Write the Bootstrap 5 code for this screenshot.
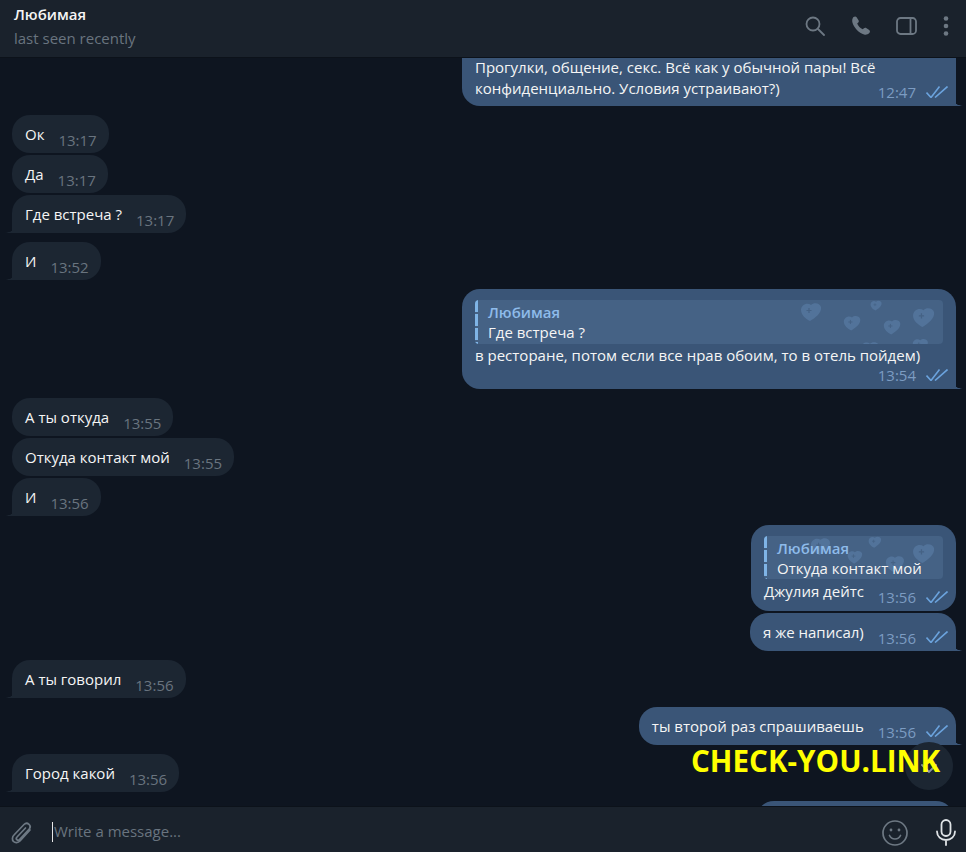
<!doctype html>
<html lang="ru"><head><meta charset="utf-8">
<link rel="stylesheet" href="https://cdn.jsdelivr.net/npm/bootstrap@5.3.0/dist/css/bootstrap.min.css">
<style>
html,body{height:100%;margin:0}
body{background:#0e1520;font-family:"Open Sans","Noto Sans",sans-serif;font-size:15px;color:#f5f5f5;overflow:hidden}
.tg-app{height:852px;width:966px;position:relative;background:#0e1520}
.tg-head{height:58px;flex:none;background:#1a222c;border-bottom:1px solid #0c121a;padding:5px 17px 0 14px;position:relative;z-index:2}
.tg-name{font-size:15px;font-weight:600;line-height:18px;color:#f5f5f5}
.tg-seen{font-size:15px;line-height:20px;margin-top:5px;color:#69747f}
.tg-chat{flex:1 1 auto;overflow:hidden;padding:0 10px 0 12px;min-height:0}
.bub{position:relative;border-radius:18px;padding:9px 13px 0;height:38px;line-height:20px;white-space:nowrap;flex:none}
.bub-in{background:#1c2632;align-self:flex-start;margin-top:2px;padding-right:12px}
.bub-out{background:#3a5577;align-self:flex-end;margin-top:2px;color:#f5f5f5;padding-right:8px}
.grp{margin-top:9px}
.tail-in{border-bottom-left-radius:0}
.tail-out{border-bottom-right-radius:0}
.tail-in::before,.tail-out::before{content:"";position:absolute;bottom:0;width:8px;height:14px}
.tail-in::before{left:-7px;background:radial-gradient(circle at 0 0,transparent 13.5px,#1c2632 14px)}
.tail-out::before{right:-7px;background:radial-gradient(circle at 100% 0,transparent 13.5px,#3a5577 14px)}
.bub-time{font-size:15px;line-height:20px;color:#69747f;margin-left:14px;position:relative;top:6px}
.bub-out .bub-time{color:#7c9cc2;margin-left:14px}
.bub-row{display:flex;align-items:flex-start}
.ticks{display:block;width:22px;height:12px;margin-left:10px;position:relative;top:9px;flex:none}
.bub-top{height:49px;margin-top:-1px;width:494px;padding-top:0;border-top-left-radius:0;border-top-right-radius:0}
.bub-top p{margin:0;line-height:21px;white-space:nowrap}
.meta-abs{position:absolute;right:8px;bottom:0;height:24px;display:flex;align-items:flex-start}
.meta-abs .bub-time,.meta-abs .ticks{top:auto}
.meta-abs .bub-time{margin:0}
.meta-abs .ticks{margin-top:4px}
.reply{position:relative;background:#456285;border-radius:4px;height:44px;padding:2px 0 0 13px;line-height:20px;overflow:hidden}
.reply::before{content:"";position:absolute;left:0;top:0;bottom:0;width:3px;background:repeating-linear-gradient(180deg,#7fb4e6 0 12px,#456285 12px 14px)}
.reply-name{font-weight:600;color:#8ebbea;line-height:20px;position:relative;z-index:1}
.reply-text{line-height:20px;position:relative;z-index:1}
.reply svg{position:absolute;right:0;top:0}
.bub-reply{padding:11px 13px 0}
.reply-h{height:43px}
.reply-body{line-height:20px;margin-top:1px}
.reply-h + .reply-body{margin-top:2px}
.tg-foot{height:46px;flex:none;background:#1a222c;border-top:1px solid #0c121a;padding:6px 10px 0 9px;position:relative;z-index:2}
.caret-bar{width:1px;height:20px;background:#e8e8e8;margin:0 0 2px 17px}
.ph{color:#69747f;font-size:15px;margin:0 0 2px 1px}
.down-btn{position:absolute;left:905px;top:742px;width:48px;height:48px;padding-top:4px;border-radius:50%;background:#1c2632;z-index:1;display:flex;align-items:center;justify-content:center}
.wmark{position:absolute;left:691px;top:741px;font-size:29.6px;line-height:40px;font-weight:700;color:#ffff00;z-index:3;white-space:nowrap}
.ic{display:block;flex:none}
.i-search{margin-top:11px}
.i-phone{margin:11px 0 0 27px}
.i-panel{margin:12px 0 0 24px}
.i-dots{margin:11px 0 0 26px}
.i-mic{margin-left:28px}
.bub-last{width:198px;margin-right:2px}
</style></head>
<body>
<div class="tg-app d-flex flex-column">
  <svg width="0" height="0" class="position-absolute"><defs>
    <g id="hrt"><path d="M1 8C1 3 7 0 11 3c3-3 9-2 10 2 1 6-6 11-11 14C6 17 1 13 1 8z"/><path d="M9 6v5M6.500 8.500h5" stroke="#456285" stroke-width="1.200"/></g>
    <path id="tk" d="M.5 6.500l4.500 5L13.500.5M9 11.500L21.500.5"/>
  </defs></svg>
  <header class="tg-head d-flex justify-content-between">
    <div><div class="tg-name">Любимая</div><div class="tg-seen">last seen recently</div></div>
    <div class="d-flex align-items-start">
      <svg class="ic i-search" width="20" height="20" viewBox="0 0 20 20" fill="none" stroke="#6d7883" stroke-width="1.800"><circle cx="8" cy="8" r="6.500"/><path d="M13 13l6 6" stroke-linecap="round"/></svg>
      <svg class="ic i-phone" width="20" height="20" viewBox="2.500 2.500 20 20" fill="#6d7883"><path d="M4 3.600c1-.9 2.400-1 3.100.1l1.900 3c.5.8.4 1.700-.2 2.300l-1.100 1.100c1 2.500 3 4.600 5.600 5.700l1.100-1.100c.7-.6 1.600-.7 2.300-.2l3 1.900c1 .7 1 2.200.1 3.100-1.400 1.400-3.200 2.100-5.200 1.500C9.300 19.400 4.600 14.600 3 9.300 2.400 7.100 2.700 5 4 3.600z"/></svg>
      <svg class="ic i-panel" width="21" height="18" viewBox="0 0 21 18" fill="none" stroke="#6d7883" stroke-width="1.800"><rect x="1" y="1" width="19" height="16" rx="3.500"/><path d="M14.500 1v16"/></svg>
      <svg class="ic i-dots" width="6" height="20" viewBox="0 0 6 20" fill="#6d7883"><circle cx="3" cy="2.500" r="2.300"/><circle cx="3" cy="10" r="2.300"/><circle cx="3" cy="17.500" r="2.300"/></svg>
    </div>
  </header>

  <main class="tg-chat d-flex flex-column">
    <div class="bub bub-out bub-top tail-out">
      <p>Прогулки, общение, секс. Всё как у обычной пары! Всё</p>
      <p>конфиденциально. Условия устраивают?)</p>
      <div class="meta-abs"><span class="bub-time">12:47</span><svg class="ticks" viewBox="0 0 22 12" fill="none" stroke="#6ba3dd" stroke-width="1.600"><use href="#tk"/></svg></div>
    </div>

    <div class="bub bub-in grp"><div class="bub-row"><span>Ок</span><span class="bub-time">13:17</span></div></div>
    <div class="bub bub-in"><div class="bub-row"><span>Да</span><span class="bub-time">13:17</span></div></div>
    <div class="bub bub-in tail-in"><div class="bub-row"><span>Где встреча ?</span><span class="bub-time">13:17</span></div></div>
    <div class="bub bub-in tail-in grp"><div class="bub-row"><span>И</span><span class="bub-time">13:52</span></div></div>

    <div class="bub bub-out tail-out grp bub-reply" style="height:100px;width:494px">
      <div class="reply">
        <div class="reply-name">Любимая</div><div class="reply-text">Где встреча ?</div>
        <svg width="150" height="44" viewBox="0 0 150 44" fill="#52739a">
          <use href="#hrt" transform="translate(7 2)"/>
          <use href="#hrt" transform="translate(50 15) scale(.82)"/>
          <use href="#hrt" transform="translate(77 0) scale(.55)"/>
          <use href="#hrt" transform="translate(90 19) scale(.82)"/>
          <use href="#hrt" transform="translate(119 7) scale(1.050)"/>
          <use href="#hrt" transform="translate(67 41) scale(.9)"/>
          <use href="#hrt" transform="translate(119 38) scale(.75)"/>
        </svg>
      </div>
      <div class="reply-body">в ресторане, потом если все нрав обоим, то в отель пойдем)</div>
      <div class="meta-abs"><span class="bub-time">13:54</span><svg class="ticks" viewBox="0 0 22 12" fill="none" stroke="#6ba3dd" stroke-width="1.600"><use href="#tk"/></svg></div>
    </div>

    <div class="bub bub-in grp"><div class="bub-row"><span>А ты откуда</span><span class="bub-time">13:55</span></div></div>
    <div class="bub bub-in"><div class="bub-row"><span>Откуда контакт мой</span><span class="bub-time">13:55</span></div></div>
    <div class="bub bub-in tail-in"><div class="bub-row"><span>И</span><span class="bub-time">13:56</span></div></div>

    <div class="bub bub-out grp bub-reply" style="height:86px;width:205px">
      <div class="reply reply-h">
        <div class="reply-name">Любимая</div><div class="reply-text">Откуда контакт мой</div>
        <svg width="150" height="43" viewBox="0 0 150 43" fill="#52739a">
          <use href="#hrt" transform="translate(17 1) scale(.95)"/>
          <use href="#hrt" transform="translate(54 14) scale(.72)"/>
          <use href="#hrt" transform="translate(75 0) scale(.62)"/>
          <use href="#hrt" transform="translate(92 19) scale(.9)"/>
          <use href="#hrt" transform="translate(119 7) scale(1.050)"/>
        </svg>
      </div>
      <div class="reply-body">Джулия дейтс</div>
      <div class="meta-abs"><span class="bub-time">13:56</span><svg class="ticks" viewBox="0 0 22 12" fill="none" stroke="#6ba3dd" stroke-width="1.600"><use href="#tk"/></svg></div>
    </div>
    <div class="bub bub-out tail-out"><div class="bub-row"><span>я же написал)</span><span class="bub-time">13:56</span><svg class="ticks" viewBox="0 0 22 12" fill="none" stroke="#6ba3dd" stroke-width="1.600"><use href="#tk"/></svg></div></div>

    <div class="bub bub-in tail-in grp"><div class="bub-row"><span>А ты говорил</span><span class="bub-time">13:56</span></div></div>
    <div class="bub bub-out tail-out grp"><div class="bub-row"><span>ты второй раз спрашиваешь</span><span class="bub-time">13:56</span><svg class="ticks" viewBox="0 0 22 12" fill="none" stroke="#6ba3dd" stroke-width="1.600"><use href="#tk"/></svg></div></div>
    <div class="bub bub-in tail-in grp"><div class="bub-row"><span>Город какой</span><span class="bub-time">13:56</span></div></div>
    <div class="bub bub-out grp bub-last"></div>
  </main>

  <div class="down-btn"><svg width="24" height="24" viewBox="0 0 24 24" fill="none" stroke="#8a97a3" stroke-width="1.800" stroke-linecap="round"><path d="M5 9l7 7 7-7"/></svg></div>
  <div class="wmark">CHECK-YOU.LINK</div>

  <footer class="tg-foot d-flex align-items-center">
    <svg class="ic" width="26" height="26" viewBox="0 0 26 26" fill="none" stroke="#6d7883" stroke-width="1.700" stroke-linecap="round"><path d="M21 10L11 21c-2 2-5 2-6.500.5S3 17 5 15L15 4.500c1.500-1.500 3.500-1.500 5-.2s1.300 3.500 0 5L10.500 19.500c-.8.8-2 .8-2.700.1s-.6-1.800.2-2.600l8.500-9"/></svg>
    <span class="caret-bar"></span><span class="ph">Write a message...</span>
    <div class="ms-auto d-flex align-items-center">
      <svg class="ic" width="26" height="28" viewBox="0 0 26 28" fill="none" stroke="#6d7883" stroke-width="1.700" stroke-linecap="round"><circle cx="13" cy="14" r="12"/><path d="M7.500 16.500c1.200 2.500 3.200 3.500 5.500 3.500s4.300-1 5.500-3.500"/><circle cx="9" cy="11" r="1.400" fill="#6d7883" stroke="none"/><circle cx="17" cy="11" r="1.400" fill="#6d7883" stroke="none"/></svg>
      <svg class="ic i-mic" width="20" height="27" viewBox="0 0 20 27" fill="none" stroke="#dfe3e6" stroke-width="1.800" stroke-linecap="round"><rect x="5.500" y="1" width="9" height="16" rx="4.500"/><path d="M1 12.500c0 5 4 8.500 9 8.500s9-3.500 9-8.500M10 21v5"/></svg>
    </div>
  </footer>
</div>
</body></html>
